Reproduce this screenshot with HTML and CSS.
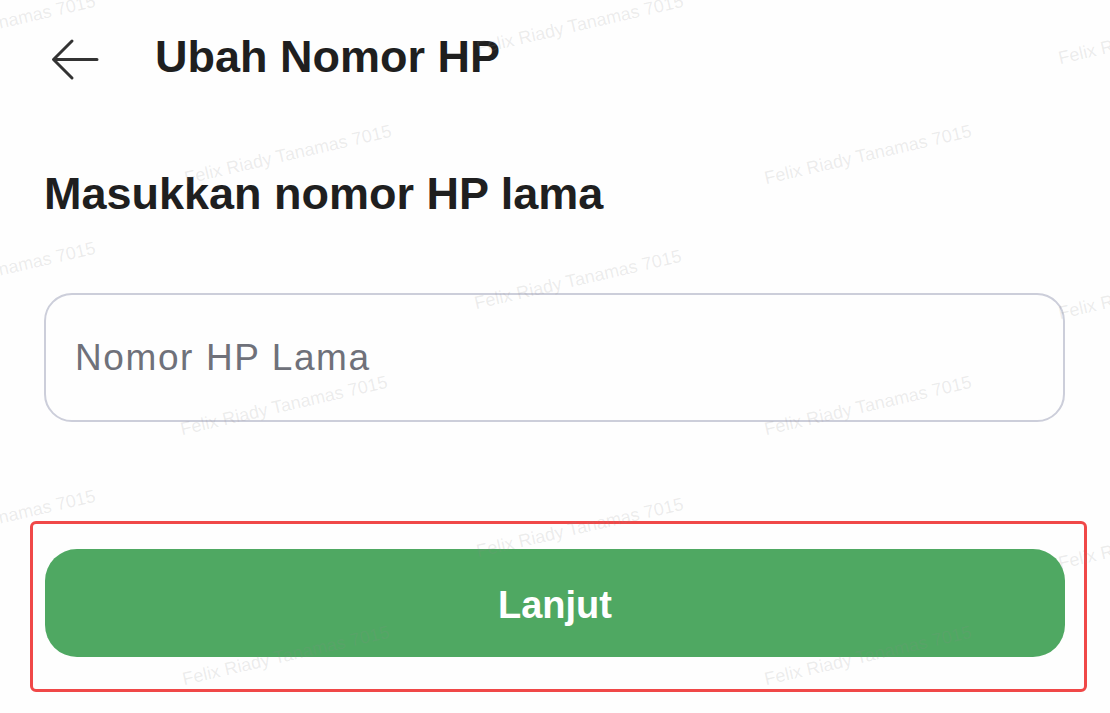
FILE: index.html
```html
<!DOCTYPE html>
<html lang="id">
<head>
    <meta charset="UTF-8">
    <title>Ubah Nomor HP</title>
    <link rel="stylesheet" href="styles.css">
</head>
<body>
    <div class="page">
        <header class="topbar">
            <svg class="back" width="50" height="44" viewBox="0 0 50 44" aria-hidden="true">
                <path d="M47 21.5 H4 M22 3 L3.5 21.5 L22 40" fill="none" stroke="#333" stroke-width="3" stroke-linecap="round" stroke-linejoin="round"/>
            </svg>
            <h1 class="title">Ubah Nomor HP</h1>
        </header>

        <h2 class="heading">Masukkan nomor HP lama</h2>

        <div class="field">
            <input type="tel" placeholder="Nomor HP Lama">
        </div>

        <div class="highlight">
            <button class="btn" type="button">Lanjut</button>
        </div>

        <!-- watermark -->
        <div class="watermark" aria-hidden="true">
            <span style="left:-8px; top:25px">Felix Riady Tanamas 7015</span>
            <span style="left:580px; top:25px">Felix Riady Tanamas 7015</span>
            <span style="left:1162px; top:35px">Felix Riady Tanamas 7015</span>
            <span style="left:288px; top:155px">Felix Riady Tanamas 7015</span>
            <span style="left:868px; top:155px">Felix Riady Tanamas 7015</span>
            <span style="left:-8px; top:272px">Felix Riady Tanamas 7015</span>
            <span style="left:578px; top:280px">Felix Riady Tanamas 7015</span>
            <span style="left:1162px; top:290px">Felix Riady Tanamas 7015</span>
            <span style="left:284px; top:406px">Felix Riady Tanamas 7015</span>
            <span style="left:868px; top:406px">Felix Riady Tanamas 7015</span>
            <span style="left:-8px; top:520px">Felix Riady Tanamas 7015</span>
            <span style="left:580px; top:528px">Felix Riady Tanamas 7015</span>
            <span style="left:1162px; top:540px">Felix Riady Tanamas 7015</span>
            <span style="left:286px; top:656px">Felix Riady Tanamas 7015</span>
            <span style="left:868px; top:656px">Felix Riady Tanamas 7015</span>
        </div>
    </div>
</body>
</html>
```

FILE: styles.css
```css
* {
    box-sizing: border-box;
}

body {
    margin: 0;
    background: #fefefe;
    font-family: "Liberation Sans", Arial, sans-serif;
    color: #1f1f1f;
}

.page {
    position: relative;
    width: 1110px;
    height: 713px;
    overflow: hidden;
}

/******************* 상단 바 *******************/

.topbar {
    display: flex;
    align-items: center;
    gap: 55px;
    padding: 30px 0 0 50px;
}

.back {
    display: block;
    flex: none;
    margin-top: 8px;
}

.title {
    margin: 0;
    font-size: 45px;
    line-height: 45px;
    font-weight: bold;
}

/******************* 본문 *******************/

.heading {
    margin: 89px 0 0 44px;
    font-size: 45px;
    line-height: 45px;
    font-weight: bold;
}

.field {
    margin: 77px 45px 0 44px;
}

.field input {
    display: block;
    width: 100%;
    height: 129px;
    border: 2px solid #ccceda;
    border-radius: 28px;
    padding: 0 0 0 29px;
    background: #fefefe;
    font: 37px "Liberation Sans", Arial, sans-serif;
    letter-spacing: 1.6px;
    color: #1f1f1f;
    outline: none;
}

.field input::placeholder {
    color: #6f717a;
}

/* 버튼을 감싸는 빨간 강조 박스 */
.highlight {
    margin: 99px 23px 0 30px;
    padding: 25px 19px 32px 12px;
    border: 3px solid #f04848;
    border-radius: 6px;
}

.btn {
    display: block;
    width: 100%;
    height: 108px;
    border: none;
    border-radius: 32px;
    background: #4fa862;
    color: #fff;
    font: bold 38px "Liberation Sans", Arial, sans-serif;
    padding: 4px 0 0;
}

/******************* 워터마크 *******************/

.watermark {
    position: absolute;
    inset: 0;
    pointer-events: none;
}

.watermark span {
    position: absolute;
    white-space: nowrap;
    font-size: 18px;
    color: rgba(140, 140, 140, 0.16);
    transform: translate(-50%, -50%) rotate(-13deg);
}
```
